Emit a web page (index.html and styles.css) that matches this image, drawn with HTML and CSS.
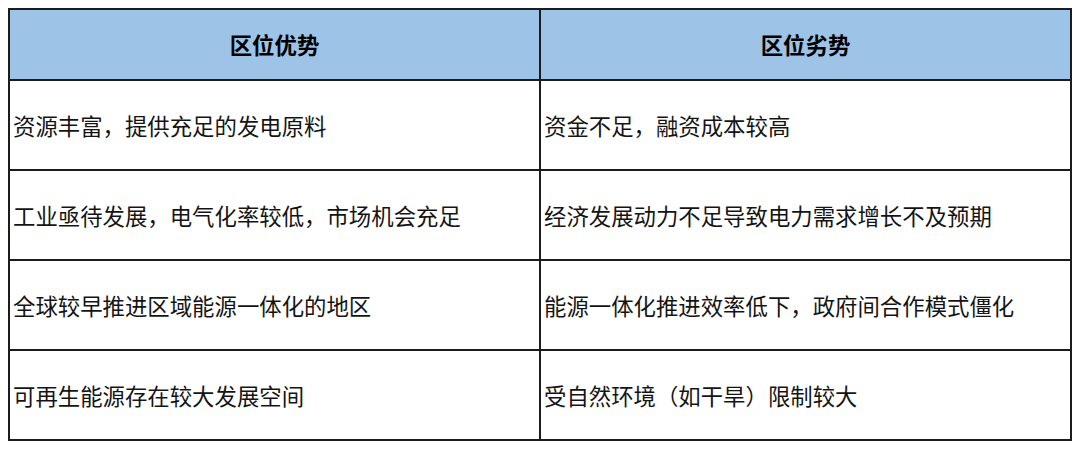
FILE: index.html
```html
<!DOCTYPE html>
<html lang="zh">
<head>
<meta charset="utf-8">
<link rel="stylesheet" href="styles.css">
</head>
<body>
<div class="table">
  <div class="cell head">区位优势</div>
  <div class="cell head">区位劣势</div>
  <div class="cell">资源丰富，提供充足的发电原料</div>
  <div class="cell">资金不足，融资成本较高</div>
  <div class="cell">工业亟待发展，电气化率较低，市场机会充足</div>
  <div class="cell">经济发展动力不足导致电力需求增长不及预期</div>
  <div class="cell">全球较早推进区域能源一体化的地区</div>
  <div class="cell">能源一体化推进效率低下，政府间合作模式僵化</div>
  <div class="cell">可再生能源存在较大发展空间</div>
  <div class="cell">受自然环境（如干旱）限制较大</div>
</div>
</body>
</html>
```
FILE: styles.css
```css
html, body {
  margin: 0;
  background: #ffffff;
}
body {
  padding: 8px;
  font-family: "Noto Sans CJK SC", "Noto Sans", sans-serif;
  color: #141414;
}
.table {
  width: 1064px;
  box-sizing: border-box;
  display: grid;
  grid-template-columns: 531px 531px;
  grid-template-rows: 71px 90px 90px 90px 90px;
  border-left: 2px solid #1c1c1c;
  border-top: 2px solid #1c1c1c;
}
.cell {
  box-sizing: border-box;
  border-right: 2px solid #1c1c1c;
  border-bottom: 2px solid #1c1c1c;
  display: flex;
  align-items: center;
  padding: 0 0 0 3px;
  font-size: 22.4px;
  line-height: 1;
  white-space: nowrap;
}
.head {
  background: #9dc3e6;
  justify-content: center;
  padding: 0;
  font-weight: 700;
  color: #000;
}
```
